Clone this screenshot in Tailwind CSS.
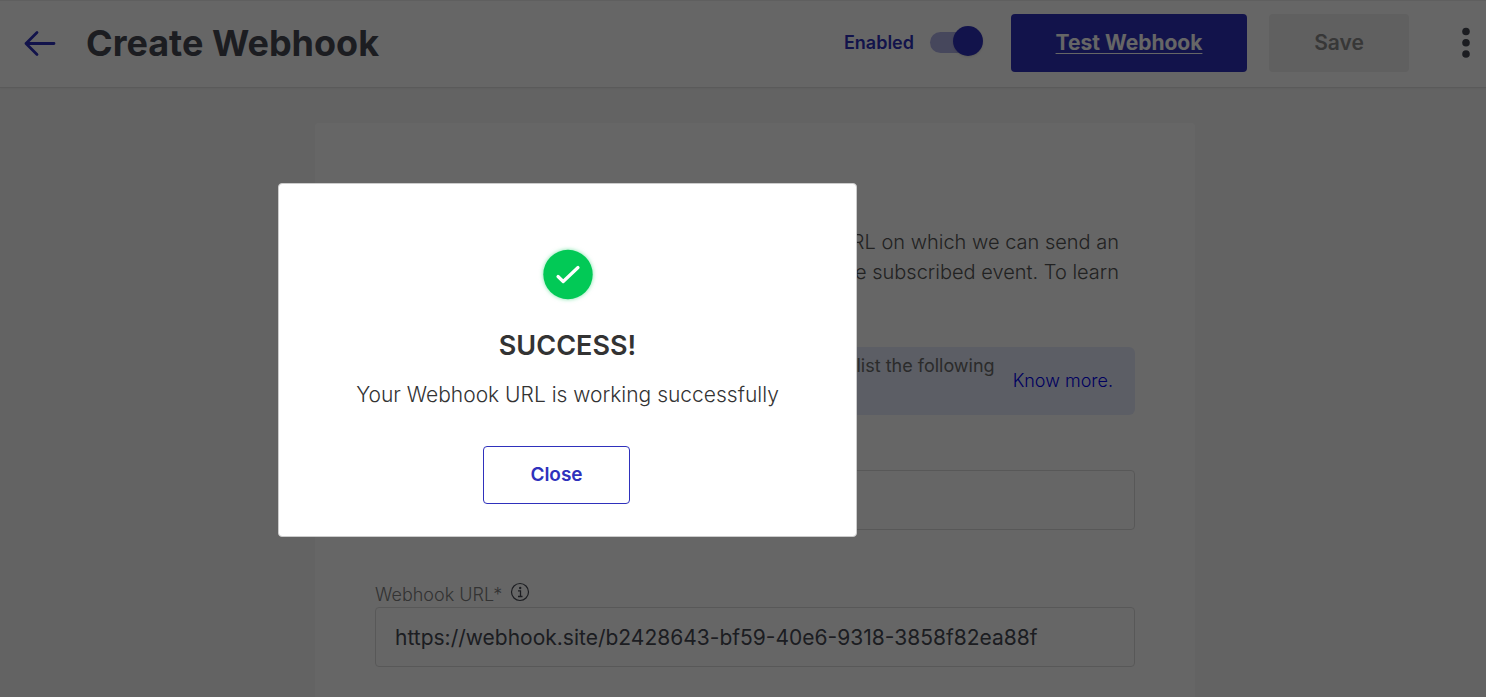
<!DOCTYPE html>
<html lang="en">
<head>
  <meta charset="UTF-8">
  <meta name="viewport" content="width=device-width, initial-scale=1.0">
  <title>Create Webhook</title>
  <script src="https://cdn.jsdelivr.net/npm/@tailwindcss/browser@4"></script>
</head>
<body class="h-screen overflow-hidden bg-[#f8f8f8] font-['Inter',sans-serif] text-[#464a54]">
  <header class="flex h-[88px] items-center border-t border-b border-t-[#eeeeee] border-b-[#e2e2e2] bg-white pr-4 pb-0.5 pl-6 shadow-xs">
    <a href="#" aria-label="Back" class="mr-[30px]">
      <svg class="h-8 w-8" viewBox="0 0 32 32" fill="none" stroke="#2f31bc" stroke-width="2.800" stroke-linecap="round" stroke-linejoin="round">
        <path d="M13 5.500 2 16.500l11 11M2 16.500h28" />
      </svg>
    </a>
    <h1 class="text-4xl font-bold">Create Webhook</h1>
    <div class="ml-auto flex items-center">
      <label for="enabled" class="mr-4 text-lg font-semibold text-[#2f31bc]">Enabled</label>
      <input id="enabled" type="checkbox" checked class="relative mr-7 mb-1 h-[30px] w-[53px] appearance-none before:absolute before:top-[6px] before:left-0 before:h-[21px] before:w-[46px] before:rounded-full before:bg-[#b0b1e6] after:absolute after:top-0 after:right-0 after:h-[30px] after:w-[30px] after:rounded-full after:bg-[#2f31bc] after:shadow-sm">
      <button class="mr-[22px] h-[58px] w-[236px] rounded bg-[#2f31bc] text-[21px] font-bold text-white underline decoration-1 underline-offset-3">Test Webhook</button>
      <button class="mr-[53px] h-[58px] w-[140px] rounded bg-[#f0f0f0] text-[21px] font-semibold text-[#8a8a8a]">Save</button>
      <button aria-label="More options">
        <svg class="h-8 w-2" viewBox="0 0 8 32" fill="#464a54">
          <circle cx="4" cy="4.500" r="3.800" /><circle cx="4" cy="15.800" r="3.800" /><circle cx="4" cy="27" r="3.800" />
        </svg>
      </button>
    </div>
  </header>

  <main class="flex justify-center pt-[35px] pl-6">
    <section class="w-full max-w-[880px] rounded bg-white px-[60px] pt-[104px] pb-16">
      <p class="pr-4 text-right text-xl leading-[30px] font-light text-[#555555]">URL on which we can send an<br>the subscribed event. To learn</p>
      <div class="mt-[60px] flex h-[68px] justify-end rounded-md bg-[#e6ecfc] pr-[22px] text-lg">
        <p class="mr-[18px] pt-[5px] text-[#6b6b6b]">list the following</p>
        <a href="#" class="self-center font-light text-[#0000ee]">Know more.</a>
      </div>
      <input type="text" aria-label="Webhook name" class="mt-[55px] block h-[60px] w-full rounded border border-[#dddddd] px-5">
      <div class="mt-[50px] flex h-[27px] items-center gap-2">
        <label for="url" class="pt-0.5 text-lg font-light text-[#808080]">Webhook URL*</label>
        <svg class="mb-1 h-5 w-5" viewBox="0 0 20 20" fill="none" stroke="#464a54">
          <circle cx="10" cy="10" r="8.500" stroke-width="1.200" />
          <circle cx="10.200" cy="6" r="1.200" fill="#464a54" stroke="none" />
          <path d="M8 8.800h2.500v5.700M8 14.500h4.500" stroke-width="1.300" />
        </svg>
      </div>
      <input id="url" type="text" value="https://webhook.site/b2428643-bf59-40e6-9318-3858f82ea88f" class="block h-[60px] w-full rounded border border-[#dddddd] px-[19px] text-[21px]">
    </section>
  </main>

  <!-- Success dialog -->
  <div class="fixed inset-0 flex items-start justify-center bg-black/60 pt-[183px] pr-[351px]">
    <div role="dialog" aria-labelledby="dialogTitle" class="flex w-full max-w-[579px] flex-col items-center rounded border border-[#cccccc] bg-white pt-16 pb-8 text-[#333333]">
      <svg class="h-[52px] w-[52px] overflow-visible" viewBox="0 0 52 52" fill="none">
        <circle cx="26" cy="26.500" r="24.700" fill="#02c956" class="drop-shadow-[0_0_2px_#02ca5688]" />
        <path d="m16 28.500 5.200 5L36 19.500" stroke="#fff" stroke-width="3.200" stroke-linecap="round" stroke-linejoin="round" />
      </svg>
      <h2 id="dialogTitle" class="mt-[26px] text-[27px] leading-10 font-semibold">SUCCESS!</h2>
      <p class="mt-[13px] text-[21px] leading-8 font-light">Your Webhook URL is working successfully</p>
      <button class="mt-[35px] mr-[22px] h-[58px] w-[147px] rounded border border-[#2f31bc] text-[19px] font-semibold text-[#2f31bc]">Close</button>
    </div>
  </div>
</body>
</html>
